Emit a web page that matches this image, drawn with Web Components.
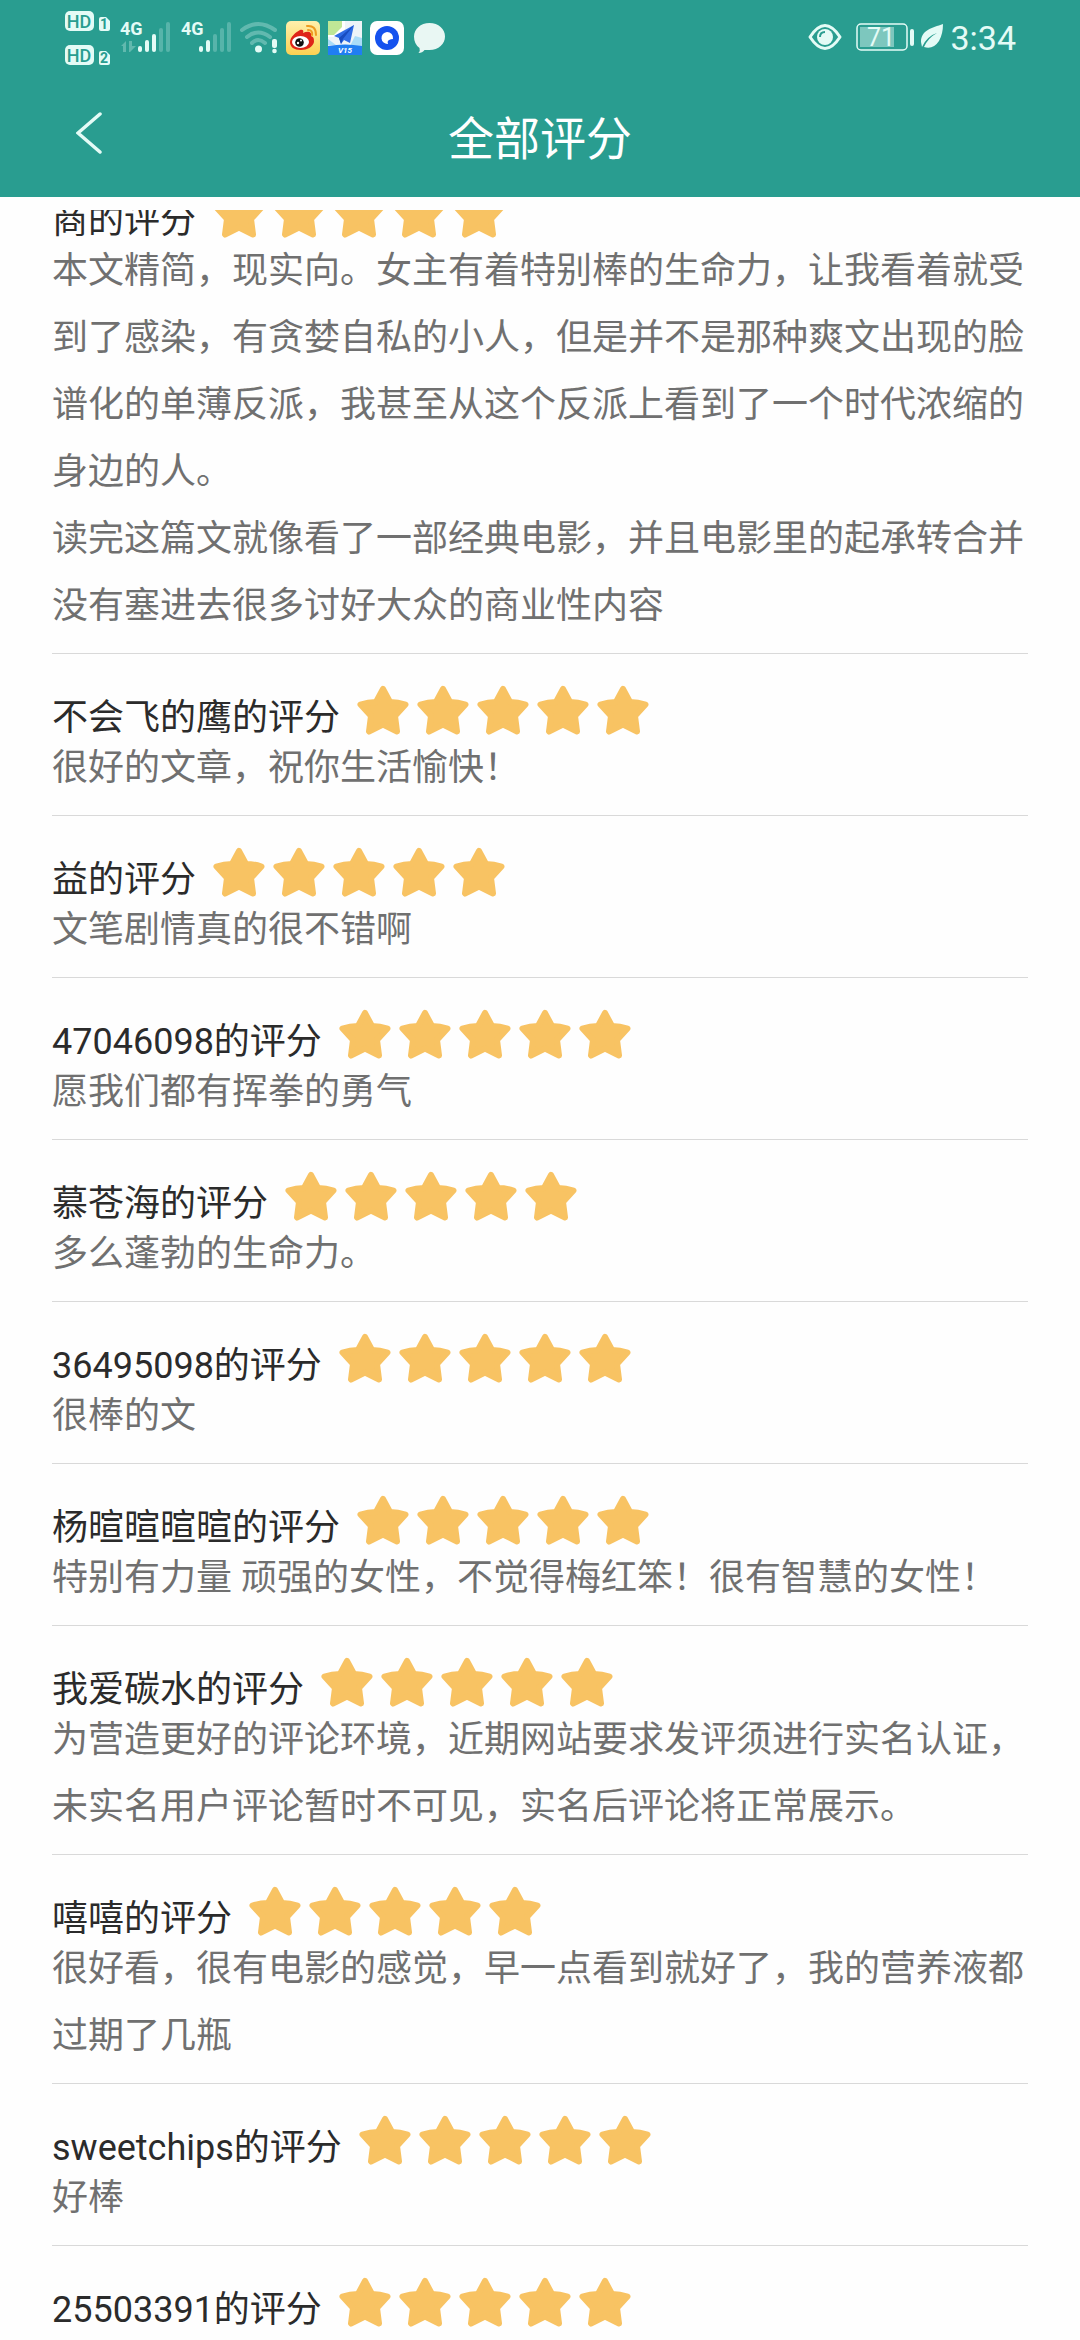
<!DOCTYPE html>
<html lang="zh-CN">
<head>
<meta charset="utf-8">
<meta name="viewport" content="width=device-width, initial-scale=1">
<title>全部评分</title>
<style>
  html, body { margin: 0; height: 100%; }
  body {
    --brand: #299d90;
    --ink: #2b2b2b;
    --muted: #707070;
    --line: #d9d9d9;
    --star: #f8c363;
    background: #fefefe;
    font-family: Roboto, "Noto Sans CJK SC", sans-serif;
  }
</style>
</head>
<body>
<rating-page>
  <status-bar slot="header"></status-bar>
  <nav-bar slot="header">全部评分</nav-bar>
  <rating-list>
    <rating-item name="商" stars="5">本文精简，现实向。女主有着特别棒的生命力，让我看着就受到了感染，有贪婪自私的小人，但是并不是那种爽文出现的脸谱化的单薄反派，我甚至从这个反派上看到了一个时代浓缩的身边的人。<br>读完这篇文就像看了一部经典电影，并且电影里的起承转合并没有塞进去很多讨好大众的商业性内容</rating-item>
    <rating-item name="不会飞的鹰" stars="5">很好的文章，祝你生活愉快！</rating-item>
    <rating-item name="益" stars="5">文笔剧情真的很不错啊</rating-item>
    <rating-item name="47046098" stars="5">愿我们都有挥拳的勇气</rating-item>
    <rating-item name="慕苍海" stars="5">多么蓬勃的生命力。</rating-item>
    <rating-item name="36495098" stars="5">很棒的文</rating-item>
    <rating-item name="杨暄暄暄暄" stars="5">特别有力量 顽强的女性，不觉得梅红笨！很有智慧的女性！</rating-item>
    <rating-item name="我爱碳水" stars="5">为营造更好的评论环境，近期网站要求发评须进行实名认证，未实名用户评论暂时不可见，实名后评论将正常展示。</rating-item>
    <rating-item name="嘻嘻" stars="5">很好看，很有电影的感觉，早一点看到就好了，我的营养液都过期了几瓶</rating-item>
    <rating-item name="sweetchips" stars="5">好棒</rating-item>
    <rating-item name="25503391" stars="5"></rating-item>
  </rating-list>
</rating-page>

<script>
const define = (tag, html, setup) => {
  const template = document.createElement('template');
  template.innerHTML = html;
  customElements.define(tag, class extends HTMLElement {
    constructor() {
      super();
      this.attachShadow({ mode: 'open' }).append(template.content.cloneNode(true));
    }
    connectedCallback() { if (setup) setup(this, this.shadowRoot); }
  });
};

define('rating-page', `
  <style>
    :host { display: flex; flex-direction: column; height: 100vh; }
    header { flex: none; background: var(--brand); color: #fff; }
    main { flex: 1; min-height: 0; padding: 13px 0; display: flex; flex-direction: column; }
  </style>
  <header><slot name="header"></slot></header>
  <main><slot></slot></main>`);

const bars = (x, lit) => [46, 40, 34, 28, 22].map((top, i) =>
  `<rect x="${x + i * 7}" y="${top}" width="4" height="${52 - top}" rx="2" opacity="${i < lit ? 1 : .25}"/>`).join('');

define('status-bar', `
  <style>
    :host { display: flex; justify-content: space-between; align-items: flex-start; height: 74px; padding: 0 64px; color: #e4fbf6; }
    .group { display: flex; }
    svg { display: block; fill: currentColor; font-family: "Liberation Sans Narrow", Roboto, sans-serif; }
    .clock { font-size: 34px; line-height: 76px; }
  </style>
  <div class="group">
    <svg width="222" height="74" viewBox="64 0 222 74" role="img" aria-label="信号">
      <rect x="65" y="11" width="29" height="20" rx="5"/>
      <rect x="65" y="45" width="29" height="20" rx="5"/>
      <path d="M101 17h5l4 4v8q0 2-2 2h-7q-2 0-2-2V19q0-2 2-2zM101 51h5l4 4v8q0 2-2 2h-7q-2 0-2-2V53q0-2 2-2z"/>
      <g fill="#299d90" text-anchor="middle" font-weight="700">
        <text x="79" y="28" font-size="18" font-weight="500" font-family="Roboto">HD</text>
        <text x="79" y="62" font-size="18" font-weight="500" font-family="Roboto">HD</text>
        <text x="104" y="29" font-size="14">1</text>
        <text x="104" y="63" font-size="14">2</text>
      </g>
      <g font-size="18" font-weight="700">
        <text x="120" y="35">4G</text>
        <text x="181" y="35">4G</text>
      </g>
      <path opacity=".3" d="M126 41v11h-3v-6h-2zM129 41h3v5h4l-6 6h-1z"/>
      ${bars(138, 3)}
      ${bars(199, 2)}
      <g fill="none" stroke="currentColor" stroke-width="4" stroke-linecap="round" opacity=".3">
        <path d="M242 30Q258 18 275 30M247 37Q258 28 270 37"/>
        <path d="M252 43Q258 37 265 43"/>
      </g>
      <circle cx="258.500" cy="49" r="3.500"/>
      <rect x="272" y="39" width="5" height="9" rx="2"/>
      <circle cx="274.500" cy="51" r="2.300"/>
    </svg>
    <svg width="160" height="74" viewBox="286 0 160 74" role="img" aria-label="通知">
      <defs>
        <linearGradient id="wb" x2="0" y2="1"><stop stop-color="#fff0ad"/><stop offset="1" stop-color="#fbd152"/></linearGradient>
        <clipPath id="mp"><rect x="328" y="21" width="34" height="34"/></clipPath>
      </defs>
      <rect x="286" y="21" width="34" height="34" rx="5" fill="url(#wb)"/>
      <path fill="#df2418" d="M290 42c0-5 6-10 10-12 3-1 4 1 3 3 4-2 9-2 8 3 3 1 3 3 3 6-1 5-7 8-13 8-7 0-11-3-11-8z"/>
      <ellipse cx="300.500" cy="42" rx="8.500" ry="6" fill="#fff"/>
      <circle cx="299.500" cy="42.500" r="4.300" fill="#111"/>
      <circle cx="298" cy="43" r="1.200" fill="#fff"/><circle cx="301" cy="40.500" r="1" fill="#fff"/>
      <path d="M307 26q9-1 9 9M308 30q5 0 4 5" fill="none" stroke="#ee9b21" stroke-width="2" stroke-linecap="round"/>
      <g clip-path="url(#mp)">
        <rect x="328" y="21" width="34" height="34" fill="#eef4f8"/>
        <path fill="#bfe796" d="M328 21h14v7l-7 7h-7z"/>
        <path fill="#a9dcf8" d="M355 36l7 2v8h-12zM328 39l8 6h-8z"/>
        <path fill="#fff" d="M342 21h3v8l-10 8h-7v-2h6l8-8z"/>
        <path fill="#2f6ce5" d="M354 25L334 36l5 2 2 6 3-4 6 3z"/>
        <path fill="#184cc0" d="M354 25L339 38l2 6 2-5z"/>
        <path fill="#207ef2" d="M328 46q17-3 34 0v10h-34z"/>
        <text x="345" y="53" font-size="8" font-weight="700" font-style="italic" text-anchor="middle" fill="#fff" font-family="Roboto">V15</text>
      </g>
      <rect x="370" y="21" width="34" height="34" rx="7" fill="#fff"/>
      <circle cx="387" cy="38" r="12" fill="#1552ee"/>
      <path fill="#fff" d="M387 32a6 6 0 1 0 1 12q-1-3 1-4 2-1 4-1a6 6 0 0 0-6-7z"/>
      <path fill="#e9f7f3" d="M429.500 23c9 0 15.500 6 15.500 13.500S438.500 50 429.500 50q-3 0-5 0-2 3-6 3 2-2 1-5-5.500-4-5.500-11.500C414 29 420.500 23 429.500 23z"/>
    </svg>
  </div>
  <div class="group">
    <svg width="142" height="74" viewBox="808 0 142 74" role="img" aria-label="电量 71%">
      <path d="M810 37q15-23 30 0-15 23-30 0z" fill="none" stroke="currentColor" stroke-width="3" stroke-linejoin="round"/>
      <circle cx="825" cy="37" r="8"/>
      <path d="M820 37q0-5 5-5" fill="none" stroke="#299d90" stroke-width="2"/>
      <rect x="857" y="24" width="50" height="26" rx="4" fill="none" stroke="currentColor" stroke-width="1.500"/>
      <rect x="860" y="27" width="34" height="20" opacity=".45"/>
      <text x="881" y="46" font-size="25" text-anchor="middle" font-family="Roboto">71</text>
      <rect x="910" y="29" width="4" height="17" rx="2"/>
      <path d="M943 24c-11 4-22 6-22 18l1 5q5-11 15-14-9 5-13 14 9 3 15-6 4-7 4-17z"/>
    </svg>
    <span class="clock">3:34</span>
  </div>`);

define('nav-bar', `
  <style>
    :host { display: grid; grid-template-columns: 150px 1fr 150px; align-items: center; height: 123px; }
    button { border: 0; padding: 0; background: none; color: inherit; height: 100%; display: flex; align-items: center; justify-content: center; }
    svg { display: block; margin: 0 0 5px 28px; }
    h1 { margin: 0; padding-top: 6px; font-size: 46px; line-height: 60px; font-weight: 400; text-align: center; }
  </style>
  <button type="button" aria-label="返回">
    <svg width="26" height="42" viewBox="0 0 26 42" fill="none" stroke="#e4fbf6" stroke-width="3.500" stroke-linecap="round"><path d="M24 2L2 21l22 19"/></svg>
  </button>
  <h1><slot></slot></h1>`);

define('rating-list', `
  <style>
    :host { display: block; flex: 1; min-height: 0; overflow-y: auto; scrollbar-width: none; padding: 0 52px; }
    .end { height: 120px; }
  </style>
  <slot></slot><div class="end"></div>`);

define('star-row', `
  <style>
    :host { display: flex; gap: 8px; }
    svg { display: block; fill: var(--star); stroke: var(--star); stroke-width: 6; stroke-linejoin: round; }
  </style>`, (host, root) => {
    const star = '<svg width="52" height="50" viewBox="0 0 52 50" aria-hidden="true"><path d="M26 4L33 17Q41 17 48.500 19.500L38 31L40 46.500L26 39.500L12 46.500L14 31L3.500 19.500Q11 17 19 17z"/></svg>';
    root.innerHTML += star.repeat(Number(host.getAttribute('count')));
  });

define('rating-item', `
  <style>
    :host { display: block; padding: 31px 0 13px; border-bottom: 1px solid var(--line); }
    .head { display: flex; align-items: flex-end; gap: 17px; }
    h2 { margin: 0; font-size: 36px; line-height: 34px; font-weight: 400; color: var(--ink); }
    p { margin: 0; font-size: 36px; line-height: 67px; min-height: 67px; color: var(--muted); }
  </style>
  <div class="head"><h2></h2><star-row></star-row></div>
  <p><slot></slot></p>`, (host, root) => {
    root.querySelector('h2').textContent = host.getAttribute('name') + '的评分';
    const row = root.querySelector('star-row');
    const fresh = document.createElement('star-row');
    fresh.setAttribute('count', host.getAttribute('stars'));
    row.replaceWith(fresh);
  });

document.querySelector('rating-list').scrollTop = 53;
</script>
</body>
</html>
